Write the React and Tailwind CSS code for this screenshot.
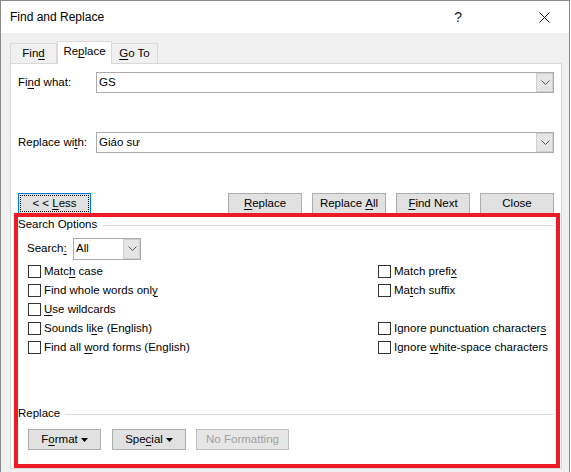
function U({ children }) {
  return <span className="underline underline-offset-[2px] decoration-1">{children}</span>;
}

function Chevron() {
  return (
    <svg width="9" height="6" viewBox="0 0 9 6" className="text-[#555]">
      <path d="M0.5 0.5 L4.5 4.5 L8.5 0.5" fill="none" stroke="currentColor" strokeWidth="1" />
    </svg>
  );
}

function Combo({ value, className }) {
  return (
    <div className={`flex h-[21px] border border-[#ababab] bg-white ${className}`}>
      <div className="flex-1 flex items-center pl-[2px] leading-none">{value}</div>
      <div className="w-[17px] flex items-center justify-center bg-[#e5e5e5] border-l border-[#c8c8c8] outline outline-1 -outline-offset-1 outline-[#d0d0d0]">
        <Chevron />
      </div>
    </div>
  );
}

function Btn({ children, className = "", disabled }) {
  return (
    <div
      className={`h-[21px] flex items-center justify-center border ${
        disabled ? "border-[#bfbfbf] bg-[#e6e6e6] text-[#a0a0a0]" : "border-[#adadad] bg-[#e1e1e1]"
      } ${className}`}
    >
      <span className="inline-flex items-center whitespace-pre">{children}</span>
    </div>
  );
}

function Check({ children }) {
  return (
    <div className="h-[19px] flex items-center">
      <div className="w-[13px] h-[13px] border border-[#333] bg-white shrink-0" />
      <span className="ml-[3px]">{children}</span>
    </div>
  );
}

function Caret() {
  return (
    <svg width="7" height="4" viewBox="0 0 7 4" className="ml-[3px]">
      <path d="M0 0 H7 L3.5 4 Z" fill="#000" />
    </svg>
  );
}

function Group({ label }) {
  return (
    <div className="h-[16px] flex items-center">
      <span>{label}</span>
      <div className="flex-1 h-px bg-[#dcdcdc] ml-[5px]" />
    </div>
  );
}

export default function App() {
  return (
    <div className="w-[570px] h-[472px] flex flex-col border-l border-r border-t border-[#8a8a8a] bg-[#f0f0f0] text-black text-[11.5px] font-['Liberation_Sans',Arial,sans-serif] overflow-hidden">
      {/* Title bar */}
      <div className="h-[32px] bg-white flex items-center shrink-0">
        <span className="ml-[9px] text-[12px]">Find and Replace</span>
        <span className="ml-auto text-[14px] text-[#222] mr-[77px]">?</span>
        <svg width="11" height="11" viewBox="0 0 11 11" className="mr-[19px]">
          <path d="M0.5 0.5 L10.5 10.5 M10.5 0.5 L0.5 10.5" stroke="#111" strokeWidth="1" />
        </svg>
      </div>

      {/* Tabs */}
      <div className="flex items-end h-[30px] ml-[9px] shrink-0 relative z-10">
        <div className="w-[47px] h-[20px] border border-b-0 border-[#d9d9d9] bg-[#f0f0f0] flex items-center justify-center">
          <span>Fin<U>d</U></span>
        </div>
        <div className="w-[55px] h-[23px] -mb-px border border-b-0 border-[#d9d9d9] bg-white flex items-center justify-center pb-[2px]">
          <span>Re<U>p</U>lace</span>
        </div>
        <div className="w-[46px] h-[20px] border border-b-0 border-l-0 border-[#d9d9d9] bg-[#f0f0f0] flex items-center justify-center">
          <span><U>G</U>o To</span>
        </div>
      </div>

      {/* Panel */}
      <div className="relative ml-[9px] w-[552px] h-[406px] border border-[#d9d9d9] bg-white pt-[8px] pl-[7px] pr-[7px]">
        <div className="flex items-center h-[21px]">
          <div className="w-[78px]">Fi<U>n</U>d what:</div>
          <Combo value="GS" className="flex-1" />
        </div>
        <div className="flex items-center h-[21px] mt-[39px]">
          <div className="w-[78px]">Replace wi<U>t</U>h:</div>
          <Combo value="Giáo sư" className="flex-1" />
        </div>

        <div className="flex mt-[40px]">
          <div className="w-[73px] h-[21px] border border-[#0078d7] bg-[#e1e1e1] p-[1px]">
            <div className="w-full h-full border border-dotted border-black flex items-center justify-center">
              <span className="whitespace-pre">&lt; &lt; <U>L</U>ess</span>
            </div>
          </div>
          <div className="ml-auto flex gap-[10px]">
            <Btn className="w-[74px]"><U>R</U>eplace</Btn>
            <Btn className="w-[74px]">Replace <U>A</U>ll</Btn>
            <Btn className="w-[74px]"><U>F</U>ind Next</Btn>
            <Btn className="w-[74px]">Close</Btn>
          </div>
        </div>

        <div className="mt-[3px]">
          <Group label="Search Options" />
        </div>

        <div className="flex items-center h-[22px] mt-[5px] pl-[9px]">
          <div className="w-[46px]">Search<U>:</U></div>
          <Combo value="All" className="w-[68px] h-[22px]" />
        </div>

        <div className="flex mt-[2px] pl-[10px]">
          <div className="w-[350px]">
            <Check>Matc<U>h</U> case</Check>
            <Check>Find whole words onl<U>y</U></Check>
            <Check><U>U</U>se wildcards</Check>
            <Check>Sounds li<U>k</U>e (English)</Check>
            <Check>Find all <U>w</U>ord forms (English)</Check>
          </div>
          <div>
            <Check>Match prefi<U>x</U></Check>
            <Check>Ma<U>t</U>ch suffix</Check>
            <div className="h-[19px]" />
            <Check>Ignore punctuation character<U>s</U></Check>
            <Check>Ignore <U>w</U>hite-space characters</Check>
          </div>
        </div>

        <div className="mt-[49px]">
          <Group label="Replace" />
        </div>

        <div className="flex mt-[7px] pl-[10px] gap-[11px]">
          <Btn className="w-[73px]">F<U>o</U>rmat<Caret /></Btn>
          <Btn className="w-[74px]">Spe<U>c</U>ial<Caret /></Btn>
          <Btn className="w-[93px] ml-[-1px]" disabled>No Formatting</Btn>
        </div>

        {/* Red highlight annotation */}
        <div className="absolute left-[3px] top-[149px] w-[546px] h-[255px] border-4 border-[#ed1c24] pointer-events-none" />
      </div>
    </div>
  );
}
